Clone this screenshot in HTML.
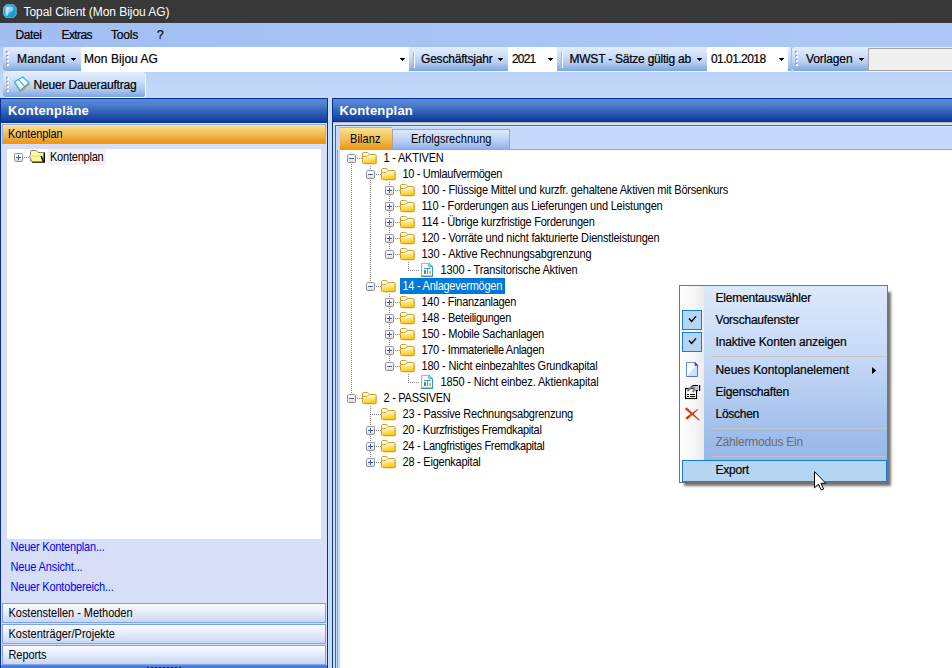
<!DOCTYPE html>
<html><head><meta charset="utf-8"><title>Topal Client</title>
<style>
*{box-sizing:border-box;margin:0;padding:0}
html,body{width:952px;height:668px;overflow:hidden;background:#fff;font-family:"Liberation Sans",sans-serif;}
body{position:relative}
div,span,svg{position:absolute}
.t{white-space:nowrap;display:block}
#title{left:0;top:0;width:952px;height:23px;background:#383838}
#bars{left:0;top:23px;width:952px;height:24px;background:linear-gradient(to right,#a1bef4,#aec9f7)}
#barsx{left:0;top:47px;width:952px;height:51px;background:linear-gradient(to bottom,#b0caf7 0,#bad1f8 25px,#bcd3f8 26px,#c5dafa 51px)}
.strip{background:linear-gradient(to bottom,#e3effe 0,#cfe0fb 35%,#b4cdf3 65%,#7fa6df 100%);border-radius:3px 0 0 3px}
.grip{width:3px;height:16px;background:
 linear-gradient(#fff,#fff) 1px 1px/2px 2px no-repeat,linear-gradient(#fff,#fff) 1px 5px/2px 2px no-repeat,linear-gradient(#fff,#fff) 1px 9px/2px 2px no-repeat,linear-gradient(#fff,#fff) 1px 13px/2px 2px no-repeat,
 linear-gradient(#a29e9c,#a29e9c) 0 0/2px 2px no-repeat,linear-gradient(#a29e9c,#a29e9c) 0 4px/2px 2px no-repeat,linear-gradient(#a29e9c,#a29e9c) 0 8px/2px 2px no-repeat,linear-gradient(#a29e9c,#a29e9c) 0 12px/2px 2px no-repeat}
.sep{width:2px;height:16px;background:linear-gradient(to right,#b6b0a8 0,#b6b0a8 1px,#fff 1px,#fff 2px)}
.combo{background:#fff}
.arr{width:5px;height:3px;background:linear-gradient(#000,#000) 0 0/5px 1px no-repeat,linear-gradient(#000,#000) 1px 1px/3px 1px no-repeat,linear-gradient(#000,#000) 2px 2px/1px 1px no-repeat}
.hdr{background:linear-gradient(to bottom,#5c8bd9 0,#4a7acd 30%,#3060b7 55%,#1b49a4 80%,#0f3c9a 95%,#042c92 100%);border-top:1px solid #002d96}
.orange{background:linear-gradient(to bottom,#fce591 0,#f5cf70 25%,#f1bb52 55%,#eca32c 82%,#f0960e 100%)}
.btn{left:2px;width:324px;height:20px;border:1px solid #7da2e7;background:linear-gradient(to bottom,#fafcff 0,#e9effc 40%,#c9d7f5 100%)}
.hd{height:1px;background:repeating-linear-gradient(to right,#888 0,#888 1px,transparent 1px,transparent 2px)}
.vd{width:1px;background:repeating-linear-gradient(to bottom,#888 0,#888 1px,transparent 1px,transparent 2px)}
.tab{border:1px solid #aaa49c;border-bottom:none}
#cm{left:679px;top:285px;width:209px;height:198px;border:1px solid #757575;background:linear-gradient(to bottom,#dde9fb 0,#c3d7f6 40%,#a0beeb 75%,#90b3e6 100%);z-index:10}
#cmm{left:0;top:0;width:24px;height:196px;background:linear-gradient(to right,#fff 0,#f6f6f6 60%,#ececec 100%)}
.chk{width:20px;height:20px;border:1px solid #167cdb;background:#b5d6f2}
.msep{left:32px;width:174px;height:1px;background:#c4c4c4}
#cmsh{left:685px;top:292.5px;width:204px;height:191.5px;background:rgba(0,0,0,.55);box-shadow:0 0 2.5px 1.5px rgba(0,0,0,.55);z-index:9}

</style></head>
<body>
<svg width="0" height="0" style="left:-10px;top:-10px">
<defs>
<linearGradient id="bg" x1="0" y1="0" x2="0" y2="1"><stop offset="0" stop-color="#fff"/><stop offset="0.55" stop-color="#f4f4f2"/><stop offset="1" stop-color="#d8d6d0"/></linearGradient>
<linearGradient id="fg" x1="0" y1="0" x2="0.15" y2="1"><stop offset="0" stop-color="#fffef4"/><stop offset="0.3" stop-color="#fffde8"/><stop offset="0.48" stop-color="#fff9a4"/><stop offset="0.6" stop-color="#ffe09a"/><stop offset="0.72" stop-color="#ffe258"/><stop offset="1" stop-color="#ffc81c"/></linearGradient>
<g id="fold">
<path d="M14.6 3.5V11.2Q14.6 12 13.6 12H3" fill="none" stroke="#8a9a50" stroke-opacity=".45" stroke-width="1"/>
<path d="M0.5 1.8Q0.5 0.5 1.8 0.5H5.4Q6.3 0.5 6.7 1.4L7.2 2.5H13Q14 2.5 14 3.6V10.5Q14 11.5 13 11.5H1.6Q0.5 11.5 0.5 10.4Z" fill="url(#fg)" stroke="#d49e2a" stroke-width="1"/>
<path d="M0.8 4.5H5L6.4 3.1H7.4" fill="none" stroke="#d8a436" stroke-width="1"/>
</g>
<g id="leaf">
<path d="M0.5 0.5H8L11.5 3.5V13H0.5Z" fill="#fff"/>
<path d="M0.5 13V0.5H8" fill="none" stroke="#80c2de" stroke-width="1"/>
<path d="M8 0.5L11.5 3.5V13" fill="none" stroke="#3096d4" stroke-width="1"/>
<path d="M7.8 0.6V3.4H11.4" fill="none" stroke="#3f9ed6" stroke-width="1"/>
<path d="M0 13.2H12" stroke="#2a8ccc" stroke-width="1.4"/>
<rect x="3" y="5" width="6.8" height="1" fill="#3a9edc"/>
<rect x="6" y="5" width="1.1" height="6" fill="#3a9edc"/>
<rect x="3" y="7" width="2" height="4" fill="#30b030"/>
<rect x="8.2" y="8" width="1.7" height="3" fill="#f0a820"/>
</g>
</defs></svg>

<div id="title"></div>
<svg style="left:3px;top:3.5px" width="14" height="14.6" viewBox="0 0 14.6 15.8"><defs><linearGradient id="lg1" x1="0" y1="0" x2="1" y2="1"><stop offset="0" stop-color="#38b8e8"/><stop offset="0.5" stop-color="#18a4dc"/><stop offset="1" stop-color="#1190cc"/></linearGradient></defs><path d="M3.2 0.8H11L14 4V11.6L11 15H3.2L0.4 11.6V4Z" fill="url(#lg1)" stroke="#8fd4ec" stroke-width="0.8"/><path d="M2.4 3H10Q12 6 9.6 8.2L6.2 9.4L5 12.6H2.4Z" fill="#e0f6fd" opacity=".55"/><path d="M3 3.6H8L5.5 7.5L4.6 11H3Z" fill="#fff" opacity=".45"/></svg>

<div id="bars"></div><div id="barsx"></div>

<!-- toolbar row 1 -->
<div class="strip" style="left:3px;top:47px;width:788px;height:24px;box-shadow:0 1px 0 #eef4fd"></div>
<div class="grip" style="left:6px;top:51px"></div>
<div class="combo" style="left:81px;top:47px;width:328px;height:25px"></div>
<div class="arr" style="left:71px;top:58px"></div>
<div class="arr" style="left:400px;top:58px"></div>
<div class="sep" style="left:413px;top:52px"></div>
<div class="arr" style="left:498px;top:58px"></div>
<div class="combo" style="left:508px;top:47px;width:49px;height:25px"></div>
<div class="arr" style="left:548px;top:58px"></div>
<div class="sep" style="left:561px;top:52px"></div>
<div class="arr" style="left:697px;top:58px"></div>
<div class="combo" style="left:707px;top:47px;width:81px;height:25px"></div>
<div class="arr" style="left:779px;top:58px"></div>
<div class="strip" style="left:792px;top:47px;width:160px;height:24px;border-radius:3px 0 0 3px;box-shadow:0 1px 0 #eef4fd"></div>
<div style="left:791px;top:48px;width:1px;height:22px;background:#b9b2a8;opacity:.8"></div>
<div class="grip" style="left:795px;top:51px"></div>
<div class="arr" style="left:859px;top:58px"></div>
<div style="left:868px;top:48px;width:84px;height:23px;background:#f0f0f0;border:1px solid #a5a5a5;border-right:none"></div>

<!-- toolbar row 2 -->
<div class="strip" style="left:3px;top:72px;width:142px;height:25px;border-radius:3px 2px 2px 3px;box-shadow:1px 1px 0 #f2f7ff"></div>
<div class="grip" style="left:6px;top:77px"></div>
<svg style="left:14px;top:76px" width="16" height="17" viewBox="0 0 16 17">
<path d="M0 6.6L6.2 16.8L15.4 8.7V6.7L6.3 14.6L0 5.6Z" fill="#e3902e"/>
<path d="M8.8 1L15 6.7L6.3 14.6L0.5 5.8Z" fill="#fff" stroke="#32b2ec" stroke-width="1.3" stroke-linejoin="round"/>
<path d="M4.6 3.4L10.7 10.6" stroke="#32b2ec" stroke-width="1.2"/>
<path d="M2.5 6.5L6.6 12.6" stroke="#c8ecfa" stroke-width="1.5"/>
</svg>

<!-- left panel -->
<div style="left:0;top:98px;width:328px;height:570px;background:#d6dff7;border-left:1px solid #0a2f96;border-right:1px solid #0a2f96"></div>
<div class="hdr" style="left:1px;top:98px;width:326px;height:25px"></div>
<div style="left:1px;top:123px;width:326px;height:1px;background:#dce8fc"></div>
<div style="left:2px;top:124px;width:324px;height:20px;border:1px solid #8fb0ef;border-bottom-color:#86a6ec"></div>
<div class="orange" style="left:3px;top:125px;width:322px;height:18px"></div>
<div style="left:7px;top:149px;width:314px;height:390px;background:#fff"></div>
<div style="left:48px;top:149px;width:57.5px;height:16px;background:#f2f2f2"></div>
<!-- left tree node -->
<div class="hd" style="left:24px;top:157px;width:6px"></div>
<svg class="bx" style="left:14px;top:153px" width="9" height="9" viewBox="0 0 9 9"><rect x="0.5" y="0.5" width="8" height="8" rx="1.2" fill="url(#bg)" stroke="#919191"/><path d="M2 4.5H7M4.5 2V7" stroke="#3a5cc0" stroke-width="1" fill="none"/></svg>
<svg style="left:29px;top:150px" width="17" height="14" viewBox="0 0 17 14">
<path d="M14 2.5H16V12.8H3V11.5H14Z" fill="#000"/>
<path d="M1.5 6V1.6Q1.5 0.5 2.6 0.5H7.4L9 2.5H14.5V11H1.5Z" fill="#ffff8a" stroke="#808080" stroke-width="1"/>
<path d="M0.5 6H12.2L14.2 11.5H2.6Z" fill="#ffff70" stroke="#8a8a8a" stroke-width="1"/>
<path d="M0.8 6H12" stroke="#fff" stroke-width="1"/>
<path d="M12.2 6L14.4 11.6" stroke="#000" stroke-width="1.4"/>
</svg>
<div class="btn" style="top:603px"></div>
<div class="btn" style="top:624px"></div>
<div class="btn" style="top:645px"></div>
<div style="left:1px;top:665px;width:326px;height:3px;background:linear-gradient(to bottom,#6f94e0 0,#4a78d4 1px,#4a78d4 3px)"></div>
<div style="left:147px;top:666.5px;width:34px;height:1.5px;background:repeating-linear-gradient(to right,#1c2c4c 0,#1c2c4c 2px,transparent 2px,transparent 4px)"></div>

<!-- splitter -->
<div style="left:328px;top:98px;width:4px;height:570px;background:linear-gradient(to right,#d0e4fc,#c2dbf4,#d0e4fc)"></div>

<!-- right panel -->
<div style="left:332px;top:98px;width:620px;height:570px;background:#d2e4fc;border-left:1px solid #0a2f96"></div>
<div class="hdr" style="left:333px;top:98px;width:619px;height:24px"></div>
<div style="left:333px;top:122px;width:619px;height:1px;background:#b4bac8"></div>
<div style="left:335px;top:125px;width:617px;height:543px;border:1px solid #646464;border-right:none;border-bottom:none;background:#c6d9fa"></div>
<div style="left:337px;top:150px;width:615px;height:518px;border-left:1px solid #a0a0a0;"></div>
<div style="left:336px;top:126px;width:616px;height:1px;background:#d6e4fb"></div>
<div style="left:392px;top:149px;width:560px;height:1px;background:#a4a4a4"></div>
<!-- tabs -->
<div class="orange" style="left:339px;top:127px;width:53px;height:23px;border-top:1px solid #b4b0a6;border-left:1px solid #f6cf8c"></div>
<div class="tab" style="left:392px;top:129px;width:118px;height:20px;background:linear-gradient(to bottom,#dfeafb 0,#bdd3f6 50%,#8fb1ea 100%)"></div>
<div style="left:340px;top:150px;width:612px;height:518px;background:#fff"></div>
<div style="left:400px;top:278px;width:105px;height:16px;background:#0078d7"></div>

<!-- context menu -->
<div id="cmsh"></div>
<div id="cm">
<div id="cmm"></div>
<div class="chk" style="left:2px;top:24px"></div>
<div class="chk" style="left:2px;top:46px"></div>
<svg style="left:7px;top:29px" width="10" height="10" viewBox="0 0 10 10"><path d="M2 3.5L4.6 6.5L9 1.4" fill="none" stroke="#000" stroke-width="1.4"/></svg>
<svg style="left:7px;top:51px" width="10" height="10" viewBox="0 0 10 10"><path d="M2 3.5L4.6 6.5L9 1.4" fill="none" stroke="#000" stroke-width="1.4"/></svg>
<div class="msep" style="top:70px"></div>
<div class="msep" style="top:142px"></div>
<div class="msep" style="top:170px"></div>
<svg style="left:6px;top:76px" width="13" height="16" viewBox="0 0 13 16"><defs><linearGradient id="dg" x1="0" y1="0" x2="1" y2="1"><stop offset="0" stop-color="#fff"/><stop offset="0.5" stop-color="#fafdff"/><stop offset="0.52" stop-color="#cde9fc"/><stop offset="1" stop-color="#bcdcf8"/></linearGradient></defs><path d="M0.5 0.5H9L11.5 3.2V14.5H0.5Z" fill="url(#dg)" stroke="#6a6ac0" stroke-width="1"/><path d="M0.5 14.5V0.5H9" fill="none" stroke="#6f8eea" stroke-width="1"/><path d="M9 0.5V3.4H11.6Z" fill="#3c3cd8" stroke="#3c3cd8" stroke-width="0.8"/></svg>
<svg style="left:5px;top:99px" width="16" height="15" viewBox="0 0 16 15"><rect x="0.5" y="3.5" width="11" height="10" fill="#fff" stroke="#000" stroke-width="1.15"/><path d="M2 9.5H4M5 9.5H10M2 11.5H4M5 11.5H10" stroke="#000" stroke-width="1"/><path d="M7 0.5H13L14.2 1.5V4.5L13 5.5H10.5L8 3Z" fill="#c4c4cc"/><path d="M7 0.5H13M10.5 5.5H13" stroke="#000" stroke-width="1"/><path d="M2.4 6L7 1.4L9.2 3.8L8 7.4" fill="none" stroke="#7c7c7c" stroke-width="2.1" stroke-linejoin="miter"/><rect x="14" y="0" width="1.2" height="6" fill="#0000a0"/></svg>
<svg style="left:5px;top:121px" width="16" height="15" viewBox="0 0 16 15"><path d="M1.66 0.22L14.8 12.96L14.2 13.64L-0.06 2.18Z" fill="#ee3208"/><path d="M12.52 2.05L13.08 2.75L2.02 12.81L0.38 10.79Z" fill="#e83208"/></svg>
<svg style="left:192px;top:81px" width="5" height="7" viewBox="0 0 5 7"><path d="M0 0L4.2 3.5L0 7Z" fill="#000"/></svg>
<div style="left:2px;top:174px;width:205px;height:22px;border:1px solid #167cdb;background:#b5d6f2"></div>
</div>
<!-- cursor -->
<svg style="left:814px;top:471px;z-index:30" width="13" height="20" viewBox="0 0 13 20"><path d="M0.5 0.6V16.8L4.4 13.2L7.2 19L9.6 18L6.9 12.3H11.8Z" fill="#fff" stroke="#000" stroke-width="1"/></svg>

<div class="hd" style="left:357px;top:158px;width:5px"></div>
<svg class="bx" style="left:347px;top:154px" width="9" height="9" viewBox="0 0 9 9"><rect x="0.5" y="0.5" width="8" height="8" rx="1.2" fill="url(#bg)" stroke="#919191"/><path d="M2 4.5H7" stroke="#3a5cc0" stroke-width="1" fill="none"/></svg>
<svg class="ic" style="left:362px;top:152px" width="16" height="13" viewBox="0 0 16 13"><use href="#fold"/></svg>
<div class="hd" style="left:376px;top:174px;width:5px"></div>
<svg class="bx" style="left:366px;top:170px" width="9" height="9" viewBox="0 0 9 9"><rect x="0.5" y="0.5" width="8" height="8" rx="1.2" fill="url(#bg)" stroke="#919191"/><path d="M2 4.5H7" stroke="#3a5cc0" stroke-width="1" fill="none"/></svg>
<svg class="ic" style="left:381px;top:168px" width="16" height="13" viewBox="0 0 16 13"><use href="#fold"/></svg>
<div class="hd" style="left:395px;top:190px;width:5px"></div>
<svg class="bx" style="left:385px;top:186px" width="9" height="9" viewBox="0 0 9 9"><rect x="0.5" y="0.5" width="8" height="8" rx="1.2" fill="url(#bg)" stroke="#919191"/><path d="M2 4.5H7M4.5 2V7" stroke="#3a5cc0" stroke-width="1" fill="none"/></svg>
<svg class="ic" style="left:400px;top:184px" width="16" height="13" viewBox="0 0 16 13"><use href="#fold"/></svg>
<div class="hd" style="left:395px;top:206px;width:5px"></div>
<svg class="bx" style="left:385px;top:202px" width="9" height="9" viewBox="0 0 9 9"><rect x="0.5" y="0.5" width="8" height="8" rx="1.2" fill="url(#bg)" stroke="#919191"/><path d="M2 4.5H7M4.5 2V7" stroke="#3a5cc0" stroke-width="1" fill="none"/></svg>
<svg class="ic" style="left:400px;top:200px" width="16" height="13" viewBox="0 0 16 13"><use href="#fold"/></svg>
<div class="hd" style="left:395px;top:222px;width:5px"></div>
<svg class="bx" style="left:385px;top:218px" width="9" height="9" viewBox="0 0 9 9"><rect x="0.5" y="0.5" width="8" height="8" rx="1.2" fill="url(#bg)" stroke="#919191"/><path d="M2 4.5H7M4.5 2V7" stroke="#3a5cc0" stroke-width="1" fill="none"/></svg>
<svg class="ic" style="left:400px;top:216px" width="16" height="13" viewBox="0 0 16 13"><use href="#fold"/></svg>
<div class="hd" style="left:395px;top:238px;width:5px"></div>
<svg class="bx" style="left:385px;top:234px" width="9" height="9" viewBox="0 0 9 9"><rect x="0.5" y="0.5" width="8" height="8" rx="1.2" fill="url(#bg)" stroke="#919191"/><path d="M2 4.5H7M4.5 2V7" stroke="#3a5cc0" stroke-width="1" fill="none"/></svg>
<svg class="ic" style="left:400px;top:232px" width="16" height="13" viewBox="0 0 16 13"><use href="#fold"/></svg>
<div class="hd" style="left:395px;top:254px;width:5px"></div>
<svg class="bx" style="left:385px;top:250px" width="9" height="9" viewBox="0 0 9 9"><rect x="0.5" y="0.5" width="8" height="8" rx="1.2" fill="url(#bg)" stroke="#919191"/><path d="M2 4.5H7" stroke="#3a5cc0" stroke-width="1" fill="none"/></svg>
<svg class="ic" style="left:400px;top:248px" width="16" height="13" viewBox="0 0 16 13"><use href="#fold"/></svg>
<div class="hd" style="left:408px;top:270px;width:11px"></div>
<svg class="ic" style="left:421px;top:263px" width="13" height="14" viewBox="0 0 13 14"><use href="#leaf"/></svg>
<div class="hd" style="left:376px;top:286px;width:5px"></div>
<svg class="bx" style="left:366px;top:282px" width="9" height="9" viewBox="0 0 9 9"><rect x="0.5" y="0.5" width="8" height="8" rx="1.2" fill="url(#bg)" stroke="#919191"/><path d="M2 4.5H7" stroke="#3a5cc0" stroke-width="1" fill="none"/></svg>
<svg class="ic" style="left:381px;top:280px" width="16" height="13" viewBox="0 0 16 13"><use href="#fold"/></svg>
<div class="hd" style="left:395px;top:302px;width:5px"></div>
<svg class="bx" style="left:385px;top:298px" width="9" height="9" viewBox="0 0 9 9"><rect x="0.5" y="0.5" width="8" height="8" rx="1.2" fill="url(#bg)" stroke="#919191"/><path d="M2 4.5H7M4.5 2V7" stroke="#3a5cc0" stroke-width="1" fill="none"/></svg>
<svg class="ic" style="left:400px;top:296px" width="16" height="13" viewBox="0 0 16 13"><use href="#fold"/></svg>
<div class="hd" style="left:395px;top:318px;width:5px"></div>
<svg class="bx" style="left:385px;top:314px" width="9" height="9" viewBox="0 0 9 9"><rect x="0.5" y="0.5" width="8" height="8" rx="1.2" fill="url(#bg)" stroke="#919191"/><path d="M2 4.5H7M4.5 2V7" stroke="#3a5cc0" stroke-width="1" fill="none"/></svg>
<svg class="ic" style="left:400px;top:312px" width="16" height="13" viewBox="0 0 16 13"><use href="#fold"/></svg>
<div class="hd" style="left:395px;top:334px;width:5px"></div>
<svg class="bx" style="left:385px;top:330px" width="9" height="9" viewBox="0 0 9 9"><rect x="0.5" y="0.5" width="8" height="8" rx="1.2" fill="url(#bg)" stroke="#919191"/><path d="M2 4.5H7M4.5 2V7" stroke="#3a5cc0" stroke-width="1" fill="none"/></svg>
<svg class="ic" style="left:400px;top:328px" width="16" height="13" viewBox="0 0 16 13"><use href="#fold"/></svg>
<div class="hd" style="left:395px;top:350px;width:5px"></div>
<svg class="bx" style="left:385px;top:346px" width="9" height="9" viewBox="0 0 9 9"><rect x="0.5" y="0.5" width="8" height="8" rx="1.2" fill="url(#bg)" stroke="#919191"/><path d="M2 4.5H7M4.5 2V7" stroke="#3a5cc0" stroke-width="1" fill="none"/></svg>
<svg class="ic" style="left:400px;top:344px" width="16" height="13" viewBox="0 0 16 13"><use href="#fold"/></svg>
<div class="hd" style="left:395px;top:366px;width:5px"></div>
<svg class="bx" style="left:385px;top:362px" width="9" height="9" viewBox="0 0 9 9"><rect x="0.5" y="0.5" width="8" height="8" rx="1.2" fill="url(#bg)" stroke="#919191"/><path d="M2 4.5H7" stroke="#3a5cc0" stroke-width="1" fill="none"/></svg>
<svg class="ic" style="left:400px;top:360px" width="16" height="13" viewBox="0 0 16 13"><use href="#fold"/></svg>
<div class="hd" style="left:408px;top:382px;width:11px"></div>
<svg class="ic" style="left:421px;top:375px" width="13" height="14" viewBox="0 0 13 14"><use href="#leaf"/></svg>
<div class="hd" style="left:357px;top:398px;width:5px"></div>
<svg class="bx" style="left:347px;top:394px" width="9" height="9" viewBox="0 0 9 9"><rect x="0.5" y="0.5" width="8" height="8" rx="1.2" fill="url(#bg)" stroke="#919191"/><path d="M2 4.5H7" stroke="#3a5cc0" stroke-width="1" fill="none"/></svg>
<svg class="ic" style="left:362px;top:392px" width="16" height="13" viewBox="0 0 16 13"><use href="#fold"/></svg>
<div class="hd" style="left:370px;top:414px;width:11px"></div>
<svg class="ic" style="left:381px;top:408px" width="16" height="13" viewBox="0 0 16 13"><use href="#fold"/></svg>
<div class="hd" style="left:376px;top:430px;width:5px"></div>
<svg class="bx" style="left:366px;top:426px" width="9" height="9" viewBox="0 0 9 9"><rect x="0.5" y="0.5" width="8" height="8" rx="1.2" fill="url(#bg)" stroke="#919191"/><path d="M2 4.5H7M4.5 2V7" stroke="#3a5cc0" stroke-width="1" fill="none"/></svg>
<svg class="ic" style="left:381px;top:424px" width="16" height="13" viewBox="0 0 16 13"><use href="#fold"/></svg>
<div class="hd" style="left:376px;top:446px;width:5px"></div>
<svg class="bx" style="left:366px;top:442px" width="9" height="9" viewBox="0 0 9 9"><rect x="0.5" y="0.5" width="8" height="8" rx="1.2" fill="url(#bg)" stroke="#919191"/><path d="M2 4.5H7M4.5 2V7" stroke="#3a5cc0" stroke-width="1" fill="none"/></svg>
<svg class="ic" style="left:381px;top:440px" width="16" height="13" viewBox="0 0 16 13"><use href="#fold"/></svg>
<div class="hd" style="left:376px;top:462px;width:5px"></div>
<svg class="bx" style="left:366px;top:458px" width="9" height="9" viewBox="0 0 9 9"><rect x="0.5" y="0.5" width="8" height="8" rx="1.2" fill="url(#bg)" stroke="#919191"/><path d="M2 4.5H7M4.5 2V7" stroke="#3a5cc0" stroke-width="1" fill="none"/></svg>
<svg class="ic" style="left:381px;top:456px" width="16" height="13" viewBox="0 0 16 13"><use href="#fold"/></svg>
<div class="vd" style="left:351px;top:164px;height:229px"></div>
<div class="vd" style="left:370px;top:166px;height:3px"></div>
<div class="vd" style="left:370px;top:180px;height:101px"></div>
<div class="vd" style="left:389px;top:182px;height:3px"></div>
<div class="vd" style="left:389px;top:196px;height:5px"></div>
<div class="vd" style="left:389px;top:212px;height:5px"></div>
<div class="vd" style="left:389px;top:228px;height:5px"></div>
<div class="vd" style="left:389px;top:244px;height:5px"></div>
<div class="vd" style="left:408px;top:262px;height:9px"></div>
<div class="vd" style="left:389px;top:294px;height:3px"></div>
<div class="vd" style="left:389px;top:308px;height:5px"></div>
<div class="vd" style="left:389px;top:324px;height:5px"></div>
<div class="vd" style="left:389px;top:340px;height:5px"></div>
<div class="vd" style="left:389px;top:356px;height:5px"></div>
<div class="vd" style="left:408px;top:374px;height:9px"></div>
<div class="vd" style="left:370px;top:406px;height:19px"></div>
<div class="vd" style="left:370px;top:436px;height:5px"></div>
<div class="vd" style="left:370px;top:452px;height:5px"></div>
<span class="t" id="t0" style="left:23.5px;top:3.5px;height:16px;line-height:16px;font-size:12px;color:#fff;letter-spacing:-0.052px;">Topal Client (Mon Bijou AG)</span>
<span class="t" id="t1" style="left:15.5px;top:26.5px;height:16px;line-height:16px;font-size:12px;color:#000;letter-spacing:-0.403px;-webkit-text-stroke:0.2px #000;">Datei</span>
<span class="t" id="t2" style="left:61.5px;top:26.5px;height:16px;line-height:16px;font-size:12px;color:#000;letter-spacing:-0.586px;-webkit-text-stroke:0.2px #000;">Extras</span>
<span class="t" id="t3" style="left:111px;top:26.5px;height:16px;line-height:16px;font-size:12px;color:#000;letter-spacing:-0.203px;-webkit-text-stroke:0.2px #000;">Tools</span>
<span class="t" id="t4" style="left:157px;top:26.5px;height:16px;line-height:16px;font-size:12px;color:#000;letter-spacing:-1.688px;-webkit-text-stroke:0.2px #000;">?</span>
<span class="t" id="t5" style="left:17px;top:51.0px;height:16px;line-height:16px;font-size:12px;color:#000;letter-spacing:0.185px;-webkit-text-stroke:0.2px #000;">Mandant</span>
<span class="t" id="t6" style="left:84px;top:51.0px;height:16px;line-height:16px;font-size:12px;color:#000;letter-spacing:0.052px;-webkit-text-stroke:0.2px #000;">Mon Bijou AG</span>
<span class="t" id="t7" style="left:421px;top:51.0px;height:16px;line-height:16px;font-size:12px;color:#000;letter-spacing:-0.196px;-webkit-text-stroke:0.2px #000;">Geschäftsjahr</span>
<span class="t" id="t8" style="left:512px;top:51.0px;height:16px;line-height:16px;font-size:12px;color:#000;letter-spacing:-0.801px;-webkit-text-stroke:0.2px #000;">2021</span>
<span class="t" id="t9" style="left:569.5px;top:51.0px;height:16px;line-height:16px;font-size:12px;color:#000;letter-spacing:-0.227px;-webkit-text-stroke:0.2px #000;">MWST - Sätze gültig ab</span>
<span class="t" id="t10" style="left:711px;top:51.0px;height:16px;line-height:16px;font-size:12px;color:#000;letter-spacing:-0.556px;-webkit-text-stroke:0.2px #000;">01.01.2018</span>
<span class="t" id="t11" style="left:806px;top:51.0px;height:16px;line-height:16px;font-size:12px;color:#000;letter-spacing:-0.109px;-webkit-text-stroke:0.2px #000;">Vorlagen</span>
<span class="t" id="t12" style="left:33.5px;top:77.0px;height:16px;line-height:16px;font-size:12px;color:#000;letter-spacing:-0.165px;-webkit-text-stroke:0.2px #000;">Neuer Dauerauftrag</span>
<span class="t" id="t13" style="left:8px;top:102.5px;height:16px;line-height:16px;font-size:13px;color:#fff;letter-spacing:0.206px;font-weight:bold;">Kontenpläne</span>
<span class="t" id="t14" style="left:339.5px;top:102.5px;height:16px;line-height:16px;font-size:13px;color:#fff;letter-spacing:0.200px;font-weight:bold;">Kontenplan</span>
<span class="t" id="t15" style="left:8px;top:126.30000000000001px;height:16px;line-height:16px;font-size:11px;color:#000;letter-spacing:-0.117px;transform:scaleY(1.08);transform-origin:0 11.6px;">Kontenplan</span>
<span class="t" id="t16" style="left:50px;top:149.4px;height:16px;line-height:16px;font-size:11px;color:#000;letter-spacing:-0.217px;transform:scaleY(1.08);transform-origin:0 11.6px;">Kontenplan</span>
<span class="t" id="t17" style="left:350px;top:130.7px;height:16px;line-height:16px;font-size:11px;color:#000;letter-spacing:0.089px;transform:scaleY(1.08);transform-origin:0 11.6px;">Bilanz</span>
<span class="t" id="t18" style="left:411px;top:130.7px;height:16px;line-height:16px;font-size:11px;color:#000;letter-spacing:0.026px;transform:scaleY(1.08);transform-origin:0 11.6px;">Erfolgsrechnung</span>
<span class="t" id="t19" style="left:10.5px;top:539.0px;height:16px;line-height:16px;font-size:11px;color:#0000ff;letter-spacing:-0.203px;transform:scaleY(1.08);transform-origin:0 11.6px;">Neuer Kontenplan...</span>
<span class="t" id="t20" style="left:10.5px;top:559.0px;height:16px;line-height:16px;font-size:11px;color:#0000ff;letter-spacing:-0.133px;transform:scaleY(1.08);transform-origin:0 11.6px;">Neue Ansicht...</span>
<span class="t" id="t21" style="left:10.5px;top:579.0px;height:16px;line-height:16px;font-size:11px;color:#0000ff;letter-spacing:-0.191px;transform:scaleY(1.08);transform-origin:0 11.6px;">Neuer Kontobereich...</span>
<span class="t" id="t22" style="left:8.5px;top:604.5px;height:16px;line-height:16px;font-size:11px;color:#000;letter-spacing:-0.031px;transform:scaleY(1.08);transform-origin:0 11.6px;">Kostenstellen - Methoden</span>
<span class="t" id="t23" style="left:8.5px;top:625.5px;height:16px;line-height:16px;font-size:11px;color:#000;letter-spacing:0.005px;transform:scaleY(1.08);transform-origin:0 11.6px;">Kostenträger/Projekte</span>
<span class="t" id="t24" style="left:8.5px;top:646.6px;height:16px;line-height:16px;font-size:11px;color:#000;letter-spacing:-0.076px;transform:scaleY(1.08);transform-origin:0 11.6px;">Reports</span>
<span class="t" id="t25" style="left:383.5px;top:149.5px;height:16px;line-height:16px;font-size:11px;color:#000;letter-spacing:-0.214px;transform:scaleY(1.08);transform-origin:0 11.6px;">1 - AKTIVEN</span>
<span class="t" id="t26" style="left:402.5px;top:165.5px;height:16px;line-height:16px;font-size:11px;color:#000;letter-spacing:-0.331px;transform:scaleY(1.08);transform-origin:0 11.6px;">10 - Umlaufvermögen</span>
<span class="t" id="t27" style="left:421.5px;top:181.5px;height:16px;line-height:16px;font-size:11px;color:#000;letter-spacing:-0.192px;transform:scaleY(1.08);transform-origin:0 11.6px;">100 - Flüssige Mittel und kurzfr. gehaltene Aktiven mit Börsenkurs</span>
<span class="t" id="t28" style="left:421.5px;top:197.5px;height:16px;line-height:16px;font-size:11px;color:#000;letter-spacing:-0.199px;transform:scaleY(1.08);transform-origin:0 11.6px;">110 - Forderungen aus Lieferungen und Leistungen</span>
<span class="t" id="t29" style="left:421.5px;top:213.5px;height:16px;line-height:16px;font-size:11px;color:#000;letter-spacing:-0.243px;transform:scaleY(1.08);transform-origin:0 11.6px;">114 - Übrige kurzfristige Forderungen</span>
<span class="t" id="t30" style="left:421.5px;top:229.5px;height:16px;line-height:16px;font-size:11px;color:#000;letter-spacing:-0.186px;transform:scaleY(1.08);transform-origin:0 11.6px;">120 - Vorräte und nicht fakturierte Dienstleistungen</span>
<span class="t" id="t31" style="left:421.5px;top:245.5px;height:16px;line-height:16px;font-size:11px;color:#000;letter-spacing:-0.134px;transform:scaleY(1.08);transform-origin:0 11.6px;">130 - Aktive Rechnungsabgrenzung</span>
<span class="t" id="t32" style="left:440.5px;top:261.5px;height:16px;line-height:16px;font-size:11px;color:#000;letter-spacing:-0.147px;transform:scaleY(1.08);transform-origin:0 11.6px;">1300 - Transitorische Aktiven</span>
<span class="t" id="t33" style="left:402.5px;top:277.5px;height:16px;line-height:16px;font-size:11px;color:#fff;letter-spacing:-0.267px;transform:scaleY(1.08);transform-origin:0 11.6px;">14 - Anlagevermögen</span>
<span class="t" id="t34" style="left:421.5px;top:293.5px;height:16px;line-height:16px;font-size:11px;color:#000;letter-spacing:-0.305px;transform:scaleY(1.08);transform-origin:0 11.6px;">140 - Finanzanlagen</span>
<span class="t" id="t35" style="left:421.5px;top:309.5px;height:16px;line-height:16px;font-size:11px;color:#000;letter-spacing:-0.279px;transform:scaleY(1.08);transform-origin:0 11.6px;">148 - Beteiligungen</span>
<span class="t" id="t36" style="left:421.5px;top:325.5px;height:16px;line-height:16px;font-size:11px;color:#000;letter-spacing:-0.221px;transform:scaleY(1.08);transform-origin:0 11.6px;">150 - Mobile Sachanlagen</span>
<span class="t" id="t37" style="left:421.5px;top:341.5px;height:16px;line-height:16px;font-size:11px;color:#000;letter-spacing:-0.322px;transform:scaleY(1.08);transform-origin:0 11.6px;">170 - Immaterielle Anlagen</span>
<span class="t" id="t38" style="left:421.5px;top:357.5px;height:16px;line-height:16px;font-size:11px;color:#000;letter-spacing:-0.201px;transform:scaleY(1.08);transform-origin:0 11.6px;">180 - Nicht einbezahltes Grundkapital</span>
<span class="t" id="t39" style="left:440.5px;top:373.5px;height:16px;line-height:16px;font-size:11px;color:#000;letter-spacing:-0.137px;transform:scaleY(1.08);transform-origin:0 11.6px;">1850 - Nicht einbez. Aktienkapital</span>
<span class="t" id="t40" style="left:383.5px;top:389.5px;height:16px;line-height:16px;font-size:11px;color:#000;letter-spacing:-0.259px;transform:scaleY(1.08);transform-origin:0 11.6px;">2 - PASSIVEN</span>
<span class="t" id="t41" style="left:402.5px;top:405.5px;height:16px;line-height:16px;font-size:11px;color:#000;letter-spacing:-0.214px;transform:scaleY(1.08);transform-origin:0 11.6px;">23 - Passive Rechnungsabgrenzung</span>
<span class="t" id="t42" style="left:402.5px;top:421.5px;height:16px;line-height:16px;font-size:11px;color:#000;letter-spacing:-0.328px;transform:scaleY(1.08);transform-origin:0 11.6px;">20 - Kurzfristiges Fremdkapital</span>
<span class="t" id="t43" style="left:402.5px;top:437.5px;height:16px;line-height:16px;font-size:11px;color:#000;letter-spacing:-0.291px;transform:scaleY(1.08);transform-origin:0 11.6px;">24 - Langfristiges Fremdkapital</span>
<span class="t" id="t44" style="left:402.5px;top:453.5px;height:16px;line-height:16px;font-size:11px;color:#000;letter-spacing:-0.233px;transform:scaleY(1.08);transform-origin:0 11.6px;">28 - Eigenkapital</span>
<span class="t" id="t45" style="left:715.5px;top:289.5px;height:16px;line-height:16px;font-size:12px;color:#000;letter-spacing:-0.201px;-webkit-text-stroke:0.2px #000;z-index:20;">Elementauswähler</span>
<span class="t" id="t46" style="left:715.5px;top:311.5px;height:16px;line-height:16px;font-size:12px;color:#000;letter-spacing:-0.215px;-webkit-text-stroke:0.2px #000;z-index:20;">Vorschaufenster</span>
<span class="t" id="t47" style="left:715.5px;top:333.5px;height:16px;line-height:16px;font-size:12px;color:#000;letter-spacing:-0.157px;-webkit-text-stroke:0.2px #000;z-index:20;">Inaktive Konten anzeigen</span>
<span class="t" id="t48" style="left:715.5px;top:361.5px;height:16px;line-height:16px;font-size:12px;color:#000;letter-spacing:-0.058px;-webkit-text-stroke:0.2px #000;z-index:20;">Neues Kontoplanelement</span>
<span class="t" id="t49" style="left:715.5px;top:383.5px;height:16px;line-height:16px;font-size:12px;color:#000;letter-spacing:-0.197px;-webkit-text-stroke:0.2px #000;z-index:20;">Eigenschaften</span>
<span class="t" id="t50" style="left:715.5px;top:405.5px;height:16px;line-height:16px;font-size:12px;color:#000;letter-spacing:-0.268px;-webkit-text-stroke:0.2px #000;z-index:20;">Löschen</span>
<span class="t" id="t51" style="left:715.5px;top:433.5px;height:16px;line-height:16px;font-size:12px;color:#6d6d6d;letter-spacing:-0.215px;z-index:20;">Zählermodus Ein</span>
<span class="t" id="t52" style="left:715.5px;top:461.5px;height:16px;line-height:16px;font-size:12px;color:#000;letter-spacing:-0.198px;-webkit-text-stroke:0.2px #000;z-index:20;">Export</span>
</body></html>
